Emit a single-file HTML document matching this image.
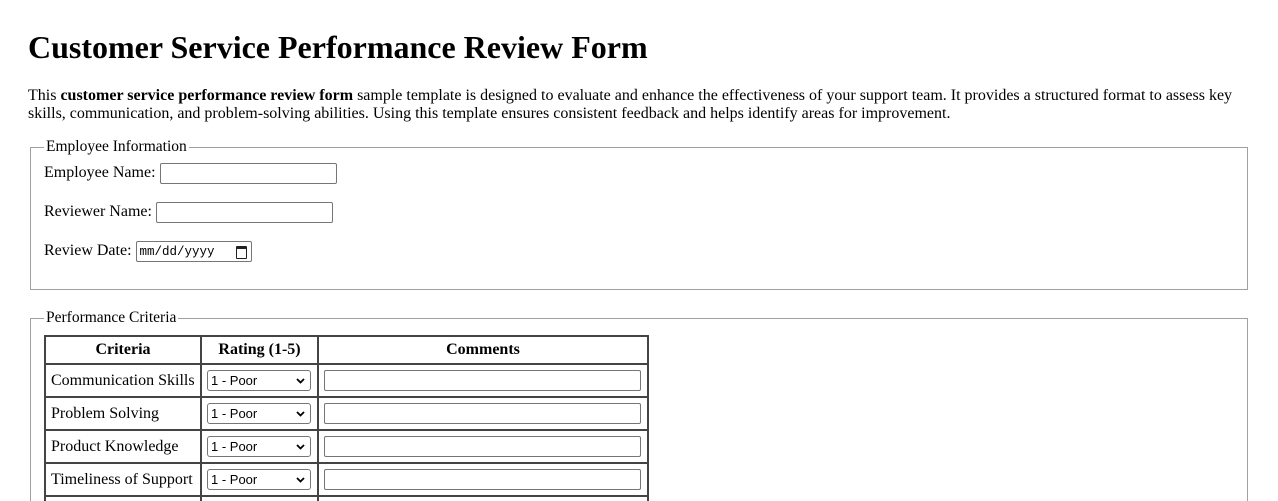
<!DOCTYPE html>
<html style="overflow:hidden"><head><style>
body{margin:0;padding:0 28px;font-family:"Liberation Serif",serif;font-size:16px;color:#000;background:#fff;width:1222px;overflow:hidden;height:501px}
h1{font-size:32px;margin:29px 0 0;line-height:37px}
p{margin:21px 0 0;line-height:18px;font-size:16px}
fieldset{border:1px solid #a0a0a0;margin:0 2px;padding:0 12px 10px 13px}
legend{padding:0 2px;font-size:15.5px;line-height:18px}
.row{height:39px;display:flex;align-items:flex-start;font-size:16px}
.row span{line-height:20px;margin-top:0}
input.t{height:21px;box-sizing:border-box;border:1px solid #767676;border-radius:2px;margin-left:4px;width:177px;padding:0}
.date{height:21px;box-sizing:border-box;border:1px solid #767676;border-radius:2px;margin-left:4px;width:116px;font-family:"Liberation Mono",monospace;font-size:12.5px;display:flex;align-items:center;padding-left:3px;position:relative}
.date i{position:absolute;right:4px;top:4px;width:9px;height:9px;border:1.5px solid #222;border-top-width:3px;border-radius:1px}
table{border-collapse:collapse;border:2px solid #444;margin-top:4px}
td,th{border:2px solid #444;padding:0 5px;height:33px;font-size:16px;text-align:left;box-sizing:border-box}
th{text-align:center;height:28px}
.sel{width:104px;height:21px;box-sizing:border-box;border:1px solid #767676;border-radius:3px;font-family:"Liberation Sans",sans-serif;font-size:13px;padding-left:3px;display:flex;align-items:center;justify-content:space-between;padding-right:5px}
.c{width:317px;height:21px;box-sizing:border-box;border:1px solid #767676;border-radius:2px}
</style></head><body>
<h1>Customer Service Performance Review Form</h1>
<p>This <b>customer service performance review form</b> sample template is designed to evaluate and enhance the effectiveness of your support team. It provides a structured format to assess key skills, communication, and problem-solving abilities. Using this template ensures consistent feedback and helps identify areas for improvement.</p>
<fieldset style="margin-top:15px;height:133px;padding-top:7px">
<legend>Employee Information</legend>
<div class="row"><span>Employee Name:</span><input class="t"></div>
<div class="row"><span>Reviewer Name:</span><input class="t"></div>
<div class="row"><span>Review Date:</span><div class="date">mm/dd/yyyy<i></i></div></div>
</fieldset>
<fieldset style="margin-top:19px;height:300px;padding-top:4px">
<legend>Performance Criteria</legend>
<table>
<colgroup><col style="width:156px"><col style="width:117px"><col style="width:330px"></colgroup>
<tr><th>Criteria</th><th>Rating (1-5)</th><th>Comments</th></tr>
<tr><td>Communication Skills</td><td><div class="sel">1 - Poor<svg width="9" height="6" viewBox="0 0 9 6"><path d="M1 1L4.5 4.5L8 1" stroke="#000" stroke-width="1.8" fill="none"/></svg></div></td><td><div class="c"></div></td></tr>
<tr><td>Problem Solving</td><td><div class="sel">1 - Poor<svg width="9" height="6" viewBox="0 0 9 6"><path d="M1 1L4.5 4.5L8 1" stroke="#000" stroke-width="1.8" fill="none"/></svg></div></td><td><div class="c"></div></td></tr>
<tr><td>Product Knowledge</td><td><div class="sel">1 - Poor<svg width="9" height="6" viewBox="0 0 9 6"><path d="M1 1L4.5 4.5L8 1" stroke="#000" stroke-width="1.8" fill="none"/></svg></div></td><td><div class="c"></div></td></tr>
<tr><td>Timeliness of Support</td><td><div class="sel">1 - Poor<svg width="9" height="6" viewBox="0 0 9 6"><path d="M1 1L4.5 4.5L8 1" stroke="#000" stroke-width="1.8" fill="none"/></svg></div></td><td><div class="c"></div></td></tr>
<tr><td>Customer Satisfaction</td><td><div class="sel">1 - Poor<svg width="9" height="6" viewBox="0 0 9 6"><path d="M1 1L4.5 4.5L8 1" stroke="#000" stroke-width="1.8" fill="none"/></svg></div></td><td><div class="c"></div></td></tr>
</table>
</fieldset>
</body></html>
